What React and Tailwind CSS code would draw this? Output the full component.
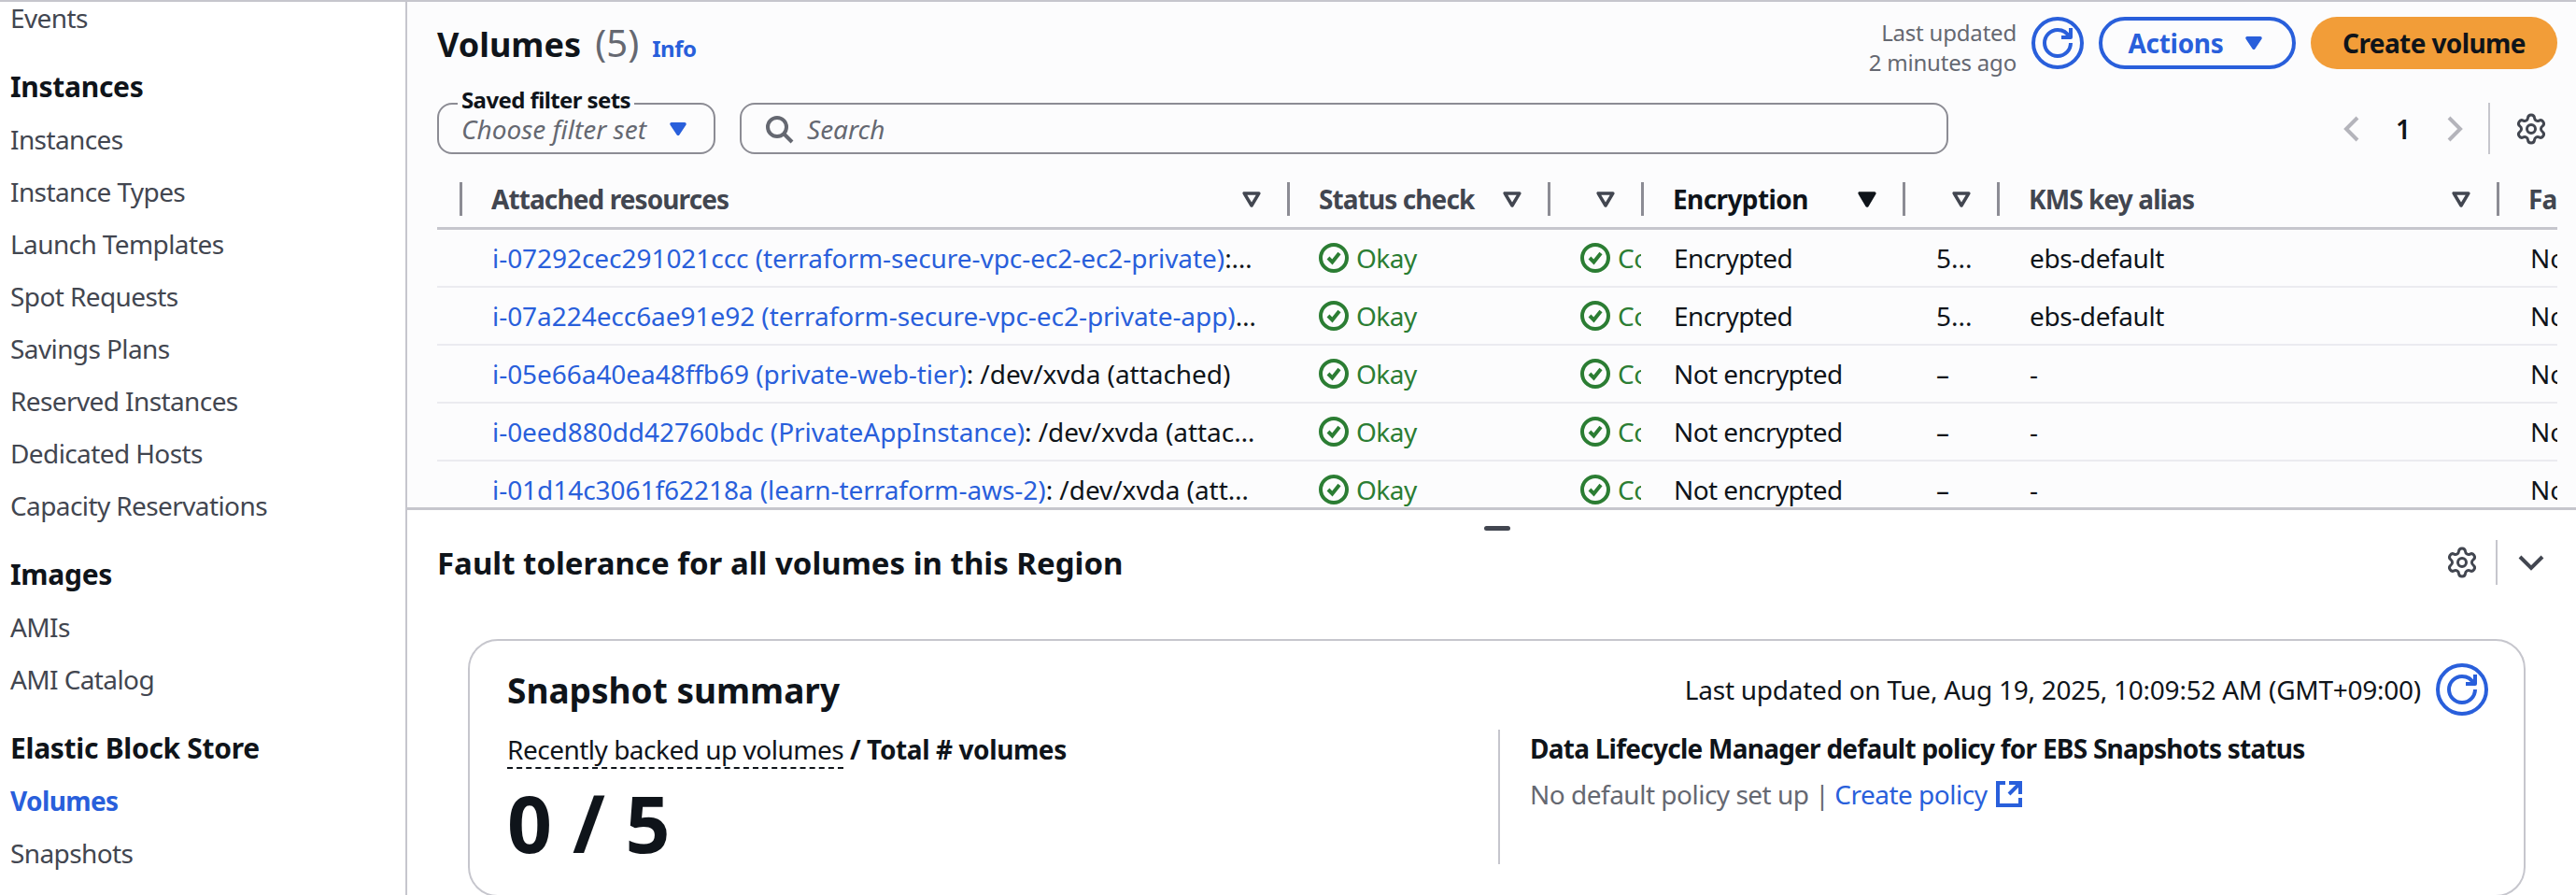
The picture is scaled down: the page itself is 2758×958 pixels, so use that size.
import { Settings } from 'lucide-react'

const rowGrid = 'grid grid-cols-[24px_886px_279px_100px_280px_101px_535px_65px]'

const navGroups = [
  { title: null, items: ['Events'] },
  {
    title: 'Instances',
    items: [
      'Instances',
      'Instance Types',
      'Launch Templates',
      'Spot Requests',
      'Savings Plans',
      'Reserved Instances',
      'Dedicated Hosts',
      'Capacity Reservations',
    ],
  },
  { title: 'Images', items: ['AMIs', 'AMI Catalog'] },
  { title: 'Elastic Block Store', items: ['Volumes', 'Snapshots'] },
]

const volumes = [
  {
    link: 'i-07292cec291021ccc (terraform-secure-vpc-ec2-ec2-private)',
    encryption: 'Encrypted',
    key: '5...',
    alias: 'ebs-default',
  },
  {
    link: 'i-07a224ecc6ae91e92 (terraform-secure-vpc-ec2-private-app)',
    encryption: 'Encrypted',
    key: '5...',
    alias: 'ebs-default',
  },
  {
    link: 'i-05e66a40ea48ffb69 (private-web-tier)',
    encryption: 'Not encrypted',
    key: '–',
    alias: '-',
  },
  {
    link: 'i-0eed880dd42760bdc (PrivateAppInstance)',
    encryption: 'Not encrypted',
    key: '–',
    alias: '-',
  },
  {
    link: 'i-01d14c3061f62218a (learn-terraform-aws-2)',
    encryption: 'Not encrypted',
    key: '–',
    alias: '-',
  },
]

function Caret({ className }) {
  return (
    <svg className={className} viewBox="0 0 16 16" fill="currentColor" stroke="currentColor" strokeWidth="2" strokeLinejoin="round">
      <path d="M4 5h8l-4 6-4-6z" />
    </svg>
  )
}

function SortCaret({ active }) {
  return (
    <svg
      className={active ? 'h-7 w-7 shrink-0 text-[#0f141a]' : 'h-7 w-7 shrink-0 text-[#424650]'}
      viewBox="0 0 16 16"
      fill={active ? 'currentColor' : 'none'}
      stroke="currentColor"
      strokeWidth="2"
      strokeLinejoin="round"
    >
      <path d="M3.5 4.5h9L8 12 3.5 4.5z" />
    </svg>
  )
}

function RefreshIcon() {
  return (
    <svg className="h-8 w-8" viewBox="0 0 16 16" fill="none" stroke="currentColor" strokeWidth="2" strokeLinejoin="round">
      <path d="M10 5h5V0" />
      <path d="M15 8a6.99 6.99 0 0 1-7 7 6.99 6.99 0 0 1-7-7 6.99 6.99 0 0 1 7-7 6.99 6.99 0 0 1 6.3 4" />
    </svg>
  )
}

function RefreshButton() {
  return (
    <button className="flex h-[56px] w-[56px] shrink-0 items-center justify-center rounded-full border-[4px] border-[#295fdb] text-[#295fdb]" type="button">
      <RefreshIcon />
    </button>
  )
}

function StatusOk({ label, className }) {
  return (
    <div className={`flex min-w-0 items-center gap-2 overflow-hidden text-[#2b7d33] ${className}`}>
      <svg className="h-8 w-8 shrink-0" viewBox="0 0 16 16" fill="none" stroke="currentColor" strokeWidth="2">
        <circle cx="8" cy="8" r="7" />
        <path d="m5 8 2.2 2.2L11 5.5" />
      </svg>
      <span className="whitespace-nowrap tracking-[-0.5px]">{label}</span>
    </div>
  )
}

function HeaderCell({ children, active, caret = true, className = 'pr-[24px]' }) {
  return (
    <div className={`flex h-9 items-center border-l-[3px] border-[#8c8c94] pl-[31px] ${className}`}>
      <span className={active ? 'min-w-0 flex-1 overflow-hidden whitespace-nowrap font-bold tracking-[-0.6px] text-[#0f141a]' : 'min-w-0 flex-1 overflow-hidden whitespace-nowrap font-bold tracking-[-0.9px] text-[#424650]'}>
        {children}
      </span>
      {caret && <SortCaret active={active} />}
    </div>
  )
}

function Sidebar() {
  return (
    <aside className="w-[436px] shrink-0 overflow-hidden border-r-[2px] border-[#c6c6cd] bg-white pl-[11px]">
      <div className="-mt-[11px]">
        {navGroups.map((group) => (
          <div className="mb-[17px]" key={group.items[0]}>
            {group.title && (
              <div className="flex h-[57px] items-center text-[30px] font-bold tracking-[-0.3px] text-[#0f141a]">{group.title}</div>
            )}
            {group.items.map((item) => (
              <div
                className={item === 'Volumes' ? 'flex h-[56px] items-center font-bold tracking-[-0.6px] text-[#295fdb]' : 'flex h-[56px] items-center tracking-[-0.6px] text-[#424650]'}
                key={item}
              >
                {item}
              </div>
            ))}
          </div>
        ))}
      </div>
    </aside>
  )
}

function VolumesPanel() {
  return (
    <section className="flex h-[544px] shrink-0 flex-col overflow-hidden border-b-[3px] border-[#c6c6cd] bg-[#fcfcfd] pl-[32px] pr-[20px]">
      <div className="flex h-[108px] shrink-0 items-start justify-between">
        <div className="mt-[19px] flex items-baseline gap-[14px]">
          <h1 className="text-[36px] font-bold leading-[50px] text-[#0f141a]">
            Volumes <span className="ml-[6px] text-[40px] font-normal text-[#656871]">(5)</span>
          </h1>
          <a className="text-[24px] font-bold tracking-[-0.5px] text-[#295fdb]">Info</a>
        </div>
        <div className="mt-[16px] flex items-start gap-4">
          <div className="mt-[1px] text-right text-[24px] leading-[32px] tracking-[-0.2px] text-[#656871]">
            <div>Last updated</div>
            <div>2 minutes ago</div>
          </div>
          <RefreshButton />
          <button className="flex h-[56px] w-[211px] items-center justify-center gap-[18px] rounded-full border-[4px] border-[#295fdb] font-bold tracking-[-0.3px] text-[#295fdb]" type="button">
            Actions
            <Caret className="h-7 w-7" />
          </button>
          <button className="h-[56px] w-[264px] rounded-full bg-[#f29d38] font-bold tracking-[-0.6px] text-[#0f141a]" type="button">
            Create volume
          </button>
        </div>
      </div>

      <div className="flex h-[56px] shrink-0 items-start">
        <div className="relative flex h-[55px] w-[298px] items-center justify-between rounded-[16px] border-[2px] border-[#8c8c94] pl-6 pr-6">
          <span className="absolute -top-[21px] left-[20px] bg-[#fcfcfd] px-[4px] text-[24px] font-bold leading-[32px] tracking-[-0.6px] text-[#0f141a]">
            Saved filter sets
          </span>
          <span className="italic text-[#656871]">Choose filter set</span>
          <Caret className="h-7 w-7 text-[#295fdb]" />
        </div>
        <div className="ml-[26px] flex h-[55px] w-[1294px] items-center gap-[14px] rounded-[16px] border-[2px] border-[#8c8c94] pl-6">
          <svg className="h-8 w-8 text-[#656871]" viewBox="0 0 16 16" fill="none" stroke="currentColor" strokeWidth="2">
            <circle cx="7" cy="7" r="5" />
            <path d="m15 15-4.5-4.5" />
          </svg>
          <span className="italic text-[#656871]">Search</span>
        </div>
        <div className="ml-auto flex h-[55px] items-center">
          <svg className="h-8 w-8 text-[#b4b4bb]" viewBox="0 0 16 16" fill="none" stroke="currentColor" strokeWidth="2">
            <path d="M11 2 5 8l6 6" />
          </svg>
          <span className="mx-[31px] font-semibold text-[#0f141a]">1</span>
          <svg className="h-8 w-8 text-[#b4b4bb]" viewBox="0 0 16 16" fill="none" stroke="currentColor" strokeWidth="2">
            <path d="m5 2 6 6-6 6" />
          </svg>
          <div className="ml-[20px] h-[55px] w-[2px] bg-[#c6c6cd]" />
          <Settings className="ml-[26px] mr-[10px] h-9 w-9 text-[#424650]" strokeWidth={2} />
        </div>
      </div>

      <div className="mt-[29px] min-h-0 flex-1 overflow-hidden">
        <div className={`${rowGrid} h-[51px] items-start border-b-[3px] border-[#c6c6cd]`}>
          <div />
          <HeaderCell>Attached resources</HeaderCell>
          <HeaderCell>Status check</HeaderCell>
          <HeaderCell />
          <HeaderCell active>Encryption</HeaderCell>
          <HeaderCell />
          <HeaderCell>KMS key alias</HeaderCell>
          <HeaderCell caret={false} className="">Fast snapshot restored</HeaderCell>
        </div>
        {volumes.map((volume) => (
          <div className={`${rowGrid} h-[62px] items-center border-b-[2px] border-[#ebebf0] text-[#0f141a]`} key={volume.link}>
            <div />
            <div className="truncate pl-[35px] pr-[33px] tracking-[-0.05px]">
              <a className="text-[#295fdb]">{volume.link}</a>: /dev/xvda (attached)
            </div>
            <StatusOk className="pl-[34px]" label="Okay" />
            <StatusOk className="pl-[35px]" label="Completed" />
            <div className="pl-[35px] tracking-[-0.6px]">{volume.encryption}</div>
            <div className="pl-[36px]">{volume.key}</div>
            <div className="pl-[35px] tracking-[-0.4px]">{volume.alias}</div>
            <div className="overflow-hidden whitespace-nowrap pl-[36px]">No</div>
          </div>
        ))}
      </div>
    </section>
  )
}

function SnapshotCard() {
  return (
    <div className="ml-[65px] mr-[54px] h-[276px] rounded-[32px] border-[2px] border-[#c6c6cd] bg-white pl-[40px] pr-[38px] pt-[23px]">
      <div className="flex items-center justify-between">
        <h3 className="text-[37px] font-bold leading-[60px] text-[#0f141a]">Snapshot summary</h3>
        <div className="-mt-[3px] flex items-center gap-4">
          <span className="tracking-[-0.25px] text-[#0f141a]">Last updated on Tue, Aug 19, 2025, 10:09:52 AM (GMT+09:00)</span>
          <RefreshButton />
        </div>
      </div>
      <div className="mt-[12px] flex">
        <div className="w-[1061px]">
          <div className="text-[#0f141a]">
            <span className="border-b-[2px] border-dashed border-[#0f141a] tracking-[-0.5px]">Recently backed up volumes</span>
            <span className="font-bold tracking-[-0.4px]"> / Total # volumes</span>
          </div>
          <div className="mt-[8px] text-[84px] font-bold leading-[100px] text-[#0f141a]">0 / 5</div>
        </div>
        <div className="h-[144px] border-l-[2px] border-[#c6c6cd] pl-[32px]">
          <div className="font-bold leading-[40px] tracking-[-0.75px] text-[#0f141a]">Data Lifecycle Manager default policy for EBS Snapshots status</div>
          <div className="mt-[8px] flex items-center tracking-[-0.5px] text-[#656871]">
            No default policy set up |
            <a className="ml-[6px] text-[#295fdb]">Create policy</a>
            <svg className="ml-2 h-8 w-8 text-[#295fdb]" viewBox="0 0 16 16" fill="none" stroke="currentColor" strokeWidth="2">
              <path d="M14 8.01v-6H8M14.02 2 8 8.01M6 2.01H2v12h12v-3.99" />
            </svg>
          </div>
        </div>
      </div>
    </div>
  )
}

function FaultPanel() {
  return (
    <section className="relative flex-1 bg-white">
      <div className="absolute left-[1153px] top-[17px] h-[5px] w-[28px] rounded-sm bg-[#424650]" />
      <div className="flex h-[138px] items-start justify-between pl-[32px] pr-[20px] pt-[29px]">
        <h2 className="text-[33px] font-bold leading-[56px] text-[#0f141a]">Fault tolerance for all volumes in this Region</h2>
        <div className="mt-[3px] flex h-[48px] items-center">
          <Settings className="h-9 w-9 text-[#424650]" strokeWidth={2} />
          <div className="ml-[18px] mr-[20px] h-[48px] w-[2px] bg-[#c6c6cd]" />
          <svg className="mr-[12px] h-8 w-8 text-[#424650]" viewBox="0 0 16 16" fill="none" stroke="currentColor" strokeWidth="2">
            <path d="m2 5 6 6 6-6" />
          </svg>
        </div>
      </div>
      <SnapshotCard />
    </section>
  )
}

export default function App() {
  return (
    <div className="flex h-[958px] w-[2758px] overflow-hidden border-t-[2px] border-[#c6c6cd] bg-white font-['Noto_Sans',sans-serif] text-[28px]">
      <Sidebar />
      <main className="flex min-w-0 flex-1 flex-col overflow-hidden">
        <VolumesPanel />
        <FaultPanel />
      </main>
    </div>
  )
}
